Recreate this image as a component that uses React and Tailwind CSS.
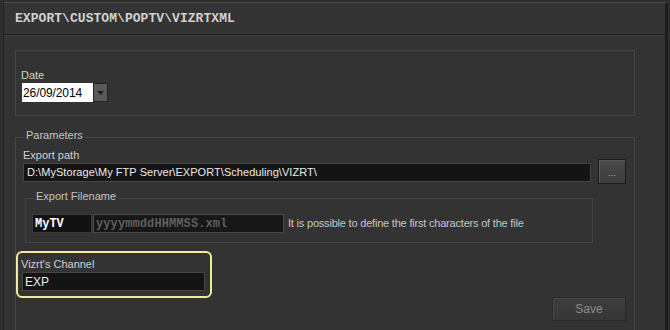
const SANS = "font-['Liberation_Sans',Arial,sans-serif]"
const MONO = "font-['Liberation_Mono','DejaVu_Sans_Mono',monospace]"

function GroupLabel({ children, className = '' }) {
  return (
    <div className={`-mt-[9px] w-fit bg-[#333333] px-[2px] text-[11px] leading-[13px] text-[#c4c4c4] ${className}`}>
      {children}
    </div>
  )
}

function DarkField({ children, className = '' }) {
  return (
    <div className={`flex h-[19px] items-center border border-[#454545] bg-[#141414] px-[2px] text-[11px] text-[#ececec] ${className}`}>
      {children}
    </div>
  )
}

export default function App() {
  return (
    <div className={`h-[330px] w-[670px] overflow-hidden bg-[#2e2e2e] pt-[2px] pl-[3px] ${SANS}`}>
      <div className="h-[340px] w-[665px] border-t border-l border-r-[3px] border-t-[#4b4b4b] border-l-[#222222] border-r-[#1d1d1d] bg-[#333333]">
        {/* title bar */}
        <div className="flex h-[32px] items-center border-b border-b-[#1f1f1f] bg-[#343434] pl-[11px]">
          <span className={`${MONO} text-[13px] font-bold tracking-[0.05px] text-[#d2d2d2]`}>EXPORT\CUSTOM\POPTV\VIZRTXML</span>
        </div>
        <div className="h-px bg-[#3b3b3b]" />

        {/* date */}
        <div className="mt-[14px] ml-[11px] h-[66px] w-[620px] border border-[#474747] pl-[5px] pt-[18px]">
          <div className="text-[11px] leading-[13px] text-[#d0d0d0]">Date</div>
          <div className="mt-px ml-px flex">
            <div className="flex h-[19px] w-[71px] items-center bg-white pl-px text-[12px] tracking-[-0.1px] text-black">26/09/2014</div>
            <div className="flex h-[19px] w-[15px] items-center justify-center border border-[#222222] bg-[#5a5a5a]">
              <svg width="7" height="4" viewBox="0 0 7 4"><path d="M0 0h7L3.5 4z" fill="#1e1e1e" /></svg>
            </div>
          </div>
        </div>

        {/* parameters */}
        <div className="mt-[21px] ml-[11px] h-[200px] w-[620px] border border-[#474747] pl-[7px] pr-[8px]">
          <GroupLabel className="ml-[1px]">Parameters</GroupLabel>
          <div className="mt-[7px] text-[11px] leading-[13px] text-[#d0d0d0]">Export path</div>
          <div className="-mt-[3px] flex items-start gap-[7px]">
            <DarkField className="mt-[4px] w-[568px] pl-[3px] tracking-[0.05px]">D:\MyStorage\My FTP Server\EXPORT\Scheduling\VIZRT\</DarkField>
            <button className="flex h-[25px] w-[28px] items-end justify-center border border-[#1a1a1a] bg-gradient-to-b from-[#4a4a4a] to-[#3c3c3c] pb-[5px] text-[9px] leading-none text-[#bdbdbd] shadow-[inset_1px_1px_0_#5a5a5a]">
              ...
            </button>
          </div>

          {/* export filename */}
          <div className="mt-[14px] ml-[2px] h-[45px] w-[568px] border border-[#444444] pl-[6px]">
            <GroupLabel className="ml-[2px] text-[#bdbdbd]">Export Filename</GroupLabel>
            <div className="mt-[11px] flex items-center">
              <div className={`flex h-[19px] w-[60px] items-center border border-[#3a3a3a] bg-[#121212] pl-[2px] ${MONO} text-[12px] font-bold text-white`}>MyTV</div>
              <div className={`ml-px flex h-[19px] w-[191px] items-center border border-[#4a4a4a] bg-[#171717] pl-[2px] ${MONO} text-[12px] font-bold tracking-[0.1px] text-[#5f5f5f]`}>yyyymmddHHMMSS.xml</div>
              <span className="ml-[4px] text-[11px] tracking-[-0.2px] text-[#c6c6c6]">It is possible to define the first characters of the file</span>
            </div>
          </div>

          {/* highlighted channel field */}
          <div className="mt-[8px] -ml-[7px] h-[47px] w-[196px] rounded-[6px] border-2 border-[#ecec9a] pl-[3px] pt-[5px]">
            <div className="text-[11px] leading-[13px] text-[#cfcfcf]">Vizrt's Channel</div>
            <DarkField className="mt-px ml-px w-[183px] pl-[2px] text-[12px]">EXP</DarkField>
          </div>

          <div className="-mt-px flex justify-end">
            <button className="h-[24px] w-[74px] border border-[#2a2a2a] bg-gradient-to-b from-[#3e3e3e] to-[#363636] text-[12px] text-[#8a8a8a] shadow-[inset_1px_1px_0_#484848]">
              Save
            </button>
          </div>
        </div>
      </div>
    </div>
  )
}
